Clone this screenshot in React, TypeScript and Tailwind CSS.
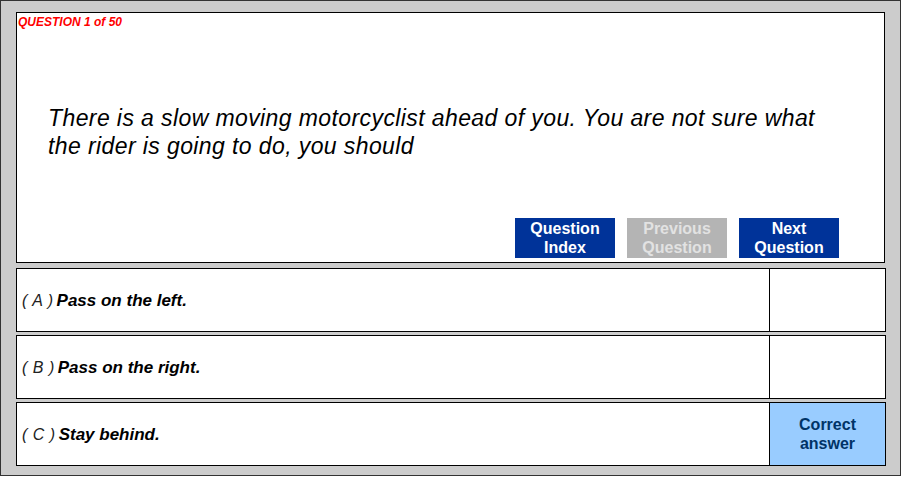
const answers = [
  { letter: 'A', text: 'Pass on the left.', correct: false },
  { letter: 'B', text: 'Pass on the right.', correct: false },
  { letter: 'C', text: 'Stay behind.', correct: true },
];

function NavButton({ label, disabled }: { label: [string, string]; disabled?: boolean }) {
  return (
    <div
      className={
        disabled
          ? 'w-[100px] h-[40px] bg-[#b4b4b4] text-[#e2e2e2] flex flex-col items-center justify-center text-[16px] font-bold leading-[19px]'
          : 'w-[100px] h-[40px] bg-[#003399] text-white flex flex-col items-center justify-center text-[16px] font-bold leading-[19px]'
      }
    >
      <span>{label[0]}</span>
      <span>{label[1]}</span>
    </div>
  );
}

export default function App() {
  return (
    <div className="w-[902px] h-[478px] bg-white font-['Liberation_Sans',Arial,sans-serif]">
      <div className="w-[901px] h-[476px] border border-[#333333] bg-[#cccccc] pl-[15px] pt-[11px] flex flex-col">
        {/* question panel */}
        <div className="w-[869px] h-[251px] border border-black bg-white flex flex-col">
          <div className="pl-[1px] pt-[2px] text-[12px] leading-[14px] font-bold italic text-[#ff0000]">
            QUESTION 1 of 50
          </div>
          <p className="mt-[75px] pl-[31px] pr-[40px] text-[23px] leading-[28px] italic tracking-[0.4px] text-black">
            There is a slow moving motorcyclist ahead of you. You are not sure what the rider is going to do, you should
          </p>
          <div className="mt-auto mb-[4px] mr-[45px] flex justify-end gap-[12px]">
            <NavButton label={['Question', 'Index']} />
            <NavButton label={['Previous', 'Question']} disabled />
            <NavButton label={['Next', 'Question']} />
          </div>
        </div>

        {/* answer rows */}
        <div className="mt-[5px] flex flex-col gap-[3px]">
          {answers.map((a) => (
            <div key={a.letter} className="w-[870px] h-[64px] border border-black bg-white flex">
              <div className="flex-1 flex items-center pl-[5px] pt-[1px] italic text-black">
                <span className="text-[16px] font-light text-[#222] mr-[3px] tracking-[0.5px]">( {a.letter} )</span>
                <span className="text-[17px] font-bold">{a.text}</span>
              </div>
              <div
                className={
                  a.correct
                    ? 'w-[116px] border-l border-black bg-[#99ccff] text-[#003366] flex flex-col items-center justify-center text-[16px] font-bold leading-[19px]'
                    : 'w-[116px] border-l border-black bg-white'
                }
              >
                {a.correct && (
                  <>
                    <span>Correct</span>
                    <span>answer</span>
                  </>
                )}
              </div>
            </div>
          ))}
        </div>
      </div>
    </div>
  );
}
